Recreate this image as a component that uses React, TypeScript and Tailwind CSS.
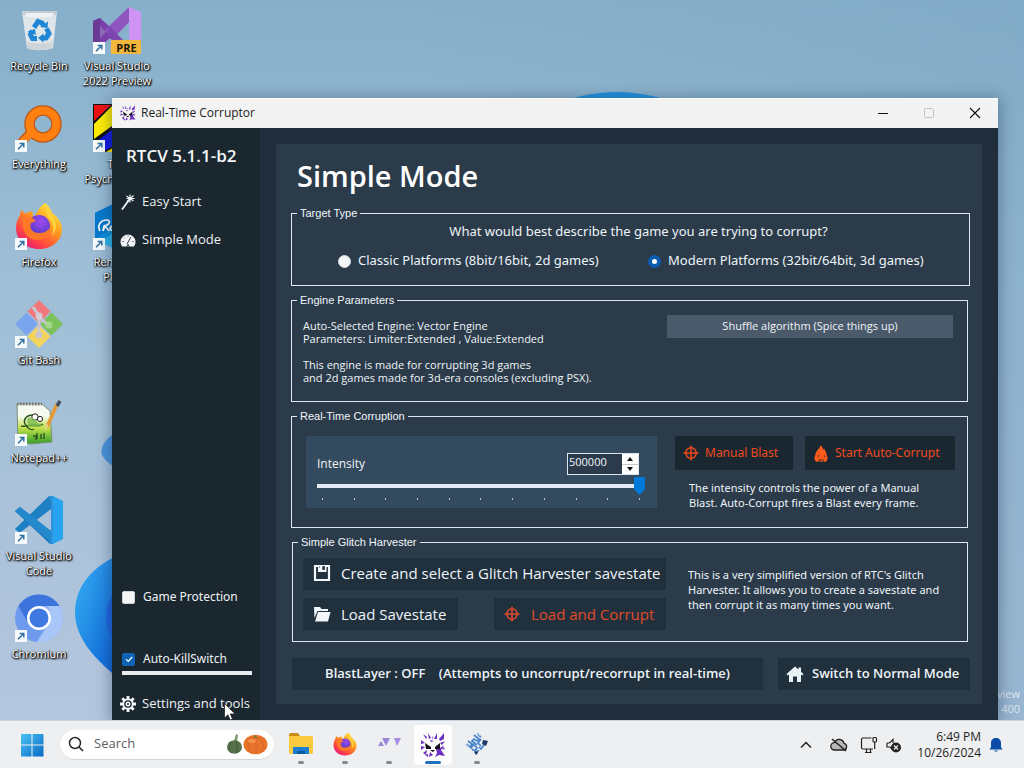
import { useState, type ReactNode } from "react";

/* ---------- Desktop icons ---------- */

function ShortcutBadge() {
  return (
    <svg viewBox="0 0 12 12" className="absolute bottom-0 left-0 size-3">
      <rect width="12" height="12" fill="#f7fafc" />
      <path d="M3 9.2 8.2 4M4.6 3.4h4.2v4.2" fill="none" stroke="#2f6f9f" strokeWidth="1.5" />
    </svg>
  );
}

function RecycleBinIcon() {
  return (
    <svg viewBox="0 0 48 48" className="size-12">
      <path d="M7 5h35l-4 37c-8 3-20 3-26 0z" fill="#dfe6ea" />
      <path d="M7 5h35l-1 4H8z" fill="#c3cdd3" />
      <path d="M10 7h29l-2 4H12z" fill="#eef2f4" />
      <path d="M11 36c9 2 18 2 27 0l-1 6c-8 3-19 3-25 0z" fill="#cdd5da" />
      <g fill="none" stroke="#1f86d6" strokeWidth="5">
        <path d="M19 21.5l4-6 4 1.5 2 3.5" />
        <path d="M31.500 22.500l2.500 5-3 4.500h-4" />
        <path d="M22 32.500h-4.500l-2-4 2-4" />
      </g>
      <path d="M25.500 20.500l7 2 .5-7zM28.500 27.500v9l-5.500-4.500zM12.500 25.500l7.500-2.500 1 6z" fill="#1f86d6" />
    </svg>
  );
}

function VisualStudioIcon() {
  return (
    <svg viewBox="0 0 48 48" className="size-12">
      <path d="M0 15l7-3 9 8 20 22v6L17 32 7 41l-7-4z" fill="#7a3fa8" />
      <path d="M0 15l7-3v29l-7-4z" fill="#6a3a94" />
      <path d="M12 24L36 1v15L20 33z" fill="#8f56c0" />
      <path d="M16 20L36 40v7L14 30z" fill="#7d45ae" />
      <path d="M36 1l12 5v30l-12 10z" fill="#cf93f3" />
      <path d="M7 20v12l6-6z" fill="#8a6ab8" />
      <rect x="18" y="34" width="31" height="15" rx="1" fill="#f3b73b" />
      <text x="33.500" y="46" textAnchor="middle" fontFamily="Open Sans" fontSize="11" fontWeight="700" fill="#1d1608">
        PRE
      </text>
    </svg>
  );
}

function EverythingIcon() {
  return (
    <svg viewBox="0 0 48 48" className="size-12">
      <path d="M14 30L4 41" stroke="#b9581a" strokeWidth="9" />
      <circle cx="28" cy="20" r="13.500" fill="none" stroke="#b9581a" strokeWidth="10.500" />
      <circle cx="28" cy="20" r="13.500" fill="none" stroke="#ff8010" strokeWidth="8" />
      <path d="M17 28L4 41" stroke="#ff8010" strokeWidth="7" />
    </svg>
  );
}

function StripesIcon() {
  return (
    <svg viewBox="0 0 48 48" className="size-12">
      <rect width="48" height="48" fill="#111" />
      <path d="M1 1h17L1 17z" fill="#ee1111" />
      <path d="M20 1h28L1 35V20z" fill="#ffee00" />
      <path d="M1 39L48 5v20L10 48H1z" fill="#1117e0" />
      <path d="M13 48L48 27v21z" fill="#ffee00" />
    </svg>
  );
}

function FirefoxIcon({ className }: { className: string }) {
  return (
    <svg viewBox="0 0 48 48" className={className}>
      <defs>
        <linearGradient id="fx-body" x1="0.85" y1="0.05" x2="0.2" y2="0.95">
          <stop offset="0" stopColor="#fff04a" />
          <stop offset="0.4" stopColor="#ff9a1f" />
          <stop offset="0.75" stopColor="#ff4a3d" />
          <stop offset="1" stopColor="#e8197a" />
        </linearGradient>
        <radialGradient id="fx-core" cx="0.6" cy="0.3" r="0.7">
          <stop offset="0" stopColor="#a04bf2" />
          <stop offset="1" stopColor="#4a3ac0" />
        </radialGradient>
      </defs>
      <path
        d="M30 1c4 3 6 6 7 10 6 4 10 10 10 16 0 12-10 20-23 20S1 38 1 26c0-6 2-10 4-13l1-5c2 1 3 2 4 4 2-2 5-3 8-2-1 2 0 4 1 5 4-6 5-10 11-14z"
        fill="url(#fx-body)"
      />
      <circle cx="24" cy="24" r="11" fill="url(#fx-core)" />
      <path d="M8 17c4-3 8-2 11 0l2 2-5 2c-2 6 2 10 8 10 5 0 8-2 11-5-1 8-6 12-13 12-9 0-16-9-14-21z" fill="#ff7a26" opacity="0.95" />
      <path d="M32 4c4 4 3 9 8 14 2 5 1 12-3 16 3-9 0-15-4-19-2-4-3-7-1-11z" fill="#ffd43a" />
    </svg>
  );
}

function HexIcon() {
  return (
    <svg viewBox="0 0 48 48" className="size-12">
      <path d="M2 11L24 0l22 11v26L24 48 2 37z" fill="#0e90dc" />
      <path d="M2 11L24 0v24L2 37z" fill="#0579cc" />
      <path d="M46 11v26L24 48 8 40z" fill="#27b4e8" />
      <path d="M7 29c-3-5 0-11 7-11 4 0 3 5-3 6l-1 5 2-5 4 5M17 26c2-3 4-2 4 0 0 3-4 3-4 0z" fill="none" stroke="#fff" strokeWidth="1.700" />
    </svg>
  );
}

function GitIcon() {
  return (
    <svg viewBox="0 0 48 48" className="size-12">
      <path d="M24 0l11.500 11.500L24 23 12.500 11.500z" fill="#f2787c" />
      <path d="M36.500 12.500L48 24 36.500 35.500 25 24z" fill="#7cc25a" />
      <path d="M11.500 12.500L23 24 11.500 35.500 0 24z" fill="#7aa5ee" />
      <path d="M24 25l11.500 11.500L24 48 12.500 36.500z" fill="#f3d45c" />
      <path d="M18 7l6 9v18M24 17l9 8" fill="none" stroke="#c9c6d2" strokeWidth="3" />
      <circle cx="24" cy="35" r="3.500" fill="#c9c6d2" />
      <circle cx="34" cy="25" r="3.500" fill="#a6d58c" />
      <circle cx="24" cy="16" r="3.500" fill="#d6cdd6" />
    </svg>
  );
}

function NotepadIcon() {
  return (
    <svg viewBox="0 0 48 48" className="size-12">
      <defs>
        <linearGradient id="np-page" x1="0" y1="0" x2="0" y2="1">
          <stop offset="0.3" stopColor="#f6faf0" />
          <stop offset="0.6" stopColor="#c3e04a" />
          <stop offset="1" stopColor="#2f9e2a" />
        </linearGradient>
      </defs>
      <path d="M2 6h25l8 7 2 31-22 2L3 42z" fill="url(#np-page)" stroke="#7d8f76" strokeWidth="1" />
      <path d="M2 6h25" stroke="#777" strokeWidth="3" strokeDasharray="1.500 1.500" />
      <path d="M6 28c5 1 8-1 12-1s7 2 10-1M18 17c-7 0-10 5-8 9s6 7 9 5M18 38h3v4M22 35v6M26 36v5M29 35v6" fill="none" stroke="#2c5423" strokeWidth="1.400" />
      <circle cx="20" cy="19" r="3.200" fill="#fff" stroke="#222" />
      <circle cx="25" cy="21" r="2.600" fill="#fff" stroke="#222" />
      <path d="M12 21c3-3 6-1 9 2s4 3 7 2l-3 4H13z" fill="#7cb94c" opacity="0.800" />
      <path d="M42 6L32 29" stroke="#e59a35" strokeWidth="3.500" />
      <path d="M45 3l-3 5" stroke="#444d63" strokeWidth="3.500" />
      <path d="M33 27l-3 7 1-8z" fill="#f2d8a4" />
    </svg>
  );
}

function VSCodeIcon() {
  return (
    <svg viewBox="0 0 48 48" className="size-12">
      <path d="M0 33l4.500 4L36 13V0h-2z" fill="#1d7fc4" />
      <path d="M0 15l5-4 31 24v13l-2-1z" fill="#1673b6" />
      <path d="M0 15l5-4 31 24v12z" fill="#2488cc" />
      <path d="M34 0h4l10 5v38l-10 5h-4l2-3V3z" fill="#27a4f0" />
      <path d="M34 0h4v48h-4l2-4V4z" fill="#3093da" />
    </svg>
  );
}

function ChromiumIcon() {
  return (
    <svg viewBox="0 0 48 48" className="size-12">
      <circle cx="24" cy="24" r="24" fill="#8fb1f2" />
      <path d="M24 24L3.500 12A24 24 0 0 0 22 48l10-18z" fill="#6f9bee" />
      <path d="M22 48l12-18c4-7 2-14-2-18h12.500A24 24 0 0 1 22 48z" fill="#a9c6f8" />
      <path d="M3.500 12A24 24 0 0 1 44.500 12H24L12 27z" fill="#3d74dc" />
      <circle cx="24" cy="24" r="12" fill="#fff" />
      <circle cx="24" cy="24" r="9.500" fill="#3f78e0" />
    </svg>
  );
}

function DesktopIcon({ label, icon, shortcut = true }: { label: string; icon: ReactNode; shortcut?: boolean }) {
  return (
    <div className="flex flex-col items-center gap-1">
      <div className="relative size-12">
        {icon}
        {shortcut && <ShortcutBadge />}
      </div>
      <span className="w-[76px] text-center text-[11px] leading-[15px] whitespace-pre-line text-white [text-shadow:1px_1px_2px_#000,0_1px_2px_#000,1px_0_1px_#000]">
        {label}
      </span>
    </div>
  );
}

function Wallpaper() {
  return (
    <svg viewBox="0 0 1024 720" preserveAspectRatio="none" className="absolute inset-0 size-full">
      <defs>
        <linearGradient id="sky" x1="0" y1="0" x2="0" y2="1">
          <stop offset="0" stopColor="#86afca" />
          <stop offset="0.4" stopColor="#9fbfd6" />
          <stop offset="1" stopColor="#b4c6de" />
        </linearGradient>
        <linearGradient id="haze" x1="0" y1="0" x2="1" y2="0">
          <stop offset="0" stopColor="#7ca6c4" stopOpacity="0" />
          <stop offset="1" stopColor="#7ca6c4" stopOpacity="0.500" />
        </linearGradient>
        <linearGradient id="petal" x1="0" y1="0" x2="1" y2="1">
          <stop offset="0" stopColor="#38b2f3" />
          <stop offset="1" stopColor="#0a5fd6" />
        </linearGradient>
      </defs>
      <rect width="1024" height="720" fill="url(#sky)" />
      <rect x="400" width="624" height="720" fill="url(#haze)" />
      <ellipse cx="617" cy="140" rx="90" ry="48" fill="#2290dc" />
      <path d="M113 434c-9 7-13 14-11 21 2 4 6 8 11 11z" fill="#4a94dc" />
      <path d="M116 556C88 570 75 590 75 612c0 24 17 45 41 64z" fill="url(#petal)" />
      <path d="M116 590c-10 12-14 30-4 50l4 6z" fill="#1d63e0" />
    </svg>
  );
}

/* ---------- Application icons ---------- */

function CorruptorIcon({ className }: { className: string }) {
  return (
    <svg viewBox="0 0 26 26" className={className} fill="#6a2fc0">
      <path d="M3 2l4 3-1 2zM8 1l3 5-2 1zM14 7l3-6 0 6zM19 7l5-6v6l-4 2zM1 8l4 3-4 1zM20 11l5-2-3 4zM1 14l4 1-4 3zM3 21l4-3-1 5zM16 17l4-1 4-3-3 5 4 6-6-1-4 2 2-4zM10 20l3 3-4 2zM10 8l4 1-3 1zM22 15l3 1-2 2zM5 23l3-1 0 3zM12 4l1 2-1 1z" />
      <path d="M5 11l6 4v2H6zM20 11l-5 4v2h5zM10 18h5l-2 2z" fill="#15101c" />
    </svg>
  );
}

function WandIcon() {
  return (
    <svg viewBox="0 0 16 16" className="size-4" fill="none" stroke="#f2f5f7">
      <path d="M2 15.500L9 6" strokeWidth="1.800" />
      <path d="M10 0.500v8M6.500 2l7 5M13.500 1.500l-6.500 6M6.500 4.500h8" strokeWidth="1.100" />
    </svg>
  );
}

function GaugeIcon() {
  return (
    <svg viewBox="0 0 16 16" className="size-4">
      <path d="M2 14.500a7.500 7.500 0 1 1 12 0z" fill="#f2f5f7" />
      <path d="M7 12l4-7M2.500 9.500h1.200M4 5.500l.8.8M8 3.500v1M12.400 9.500h1.200M7 14.500l1-2 1 2" stroke="#1b272f" strokeWidth="0.900" fill="none" />
    </svg>
  );
}

function GearIcon() {
  return (
    <svg viewBox="0 0 16 16" className="size-4" fill="none" stroke="#f2f5f7">
      <path d="M8 0v3M8 13v3M0 8h3M13 8h3M2.300 2.300l2.200 2.200M11.500 11.500l2.200 2.200M13.700 2.300l-2.200 2.200M4.500 11.500l-2.200 2.200" strokeWidth="2.800" />
      <circle cx="8" cy="8" r="4.800" strokeWidth="1.900" />
      <circle cx="8" cy="8" r="1.700" strokeWidth="1.600" />
    </svg>
  );
}

function TargetIcon() {
  return (
    <svg viewBox="0 0 16 16" className="size-4 shrink-0" fill="none" stroke="currentColor" strokeWidth="1.500">
      <circle cx="8" cy="8" r="5.200" />
      <path d="M8 0.500v15M0.500 8h15" />
    </svg>
  );
}

function FlameIcon() {
  return (
    <svg viewBox="0 0 14 18" className="h-[18px] w-3.5 shrink-0">
      <path d="M7 1c.5 2 2 3 2.500 4.500l1-.5c.5 2 2 3 2 5.500 1 2 1.500 4 .5 6l-1.500 1.200H2.500L1 16.500c-1-2-.3-4 .5-6C1.700 8 3 6.500 4.500 5 5.500 4 6 3 7 1z" fill="#ff5a1a" />
      <path d="M4.500 18l1-3M7 18v-3M9.500 18l-.8-3M4 13l1-2M11 13.500l-.5-2" fill="none" stroke="#1a2731" strokeWidth="0.800" />
    </svg>
  );
}

function SaveIcon() {
  return (
    <svg viewBox="0 0 18 18" className="size-[18px] shrink-0">
      <path d="M2 2h14v14H2z" fill="none" stroke="#f2f7fb" strokeWidth="2.200" />
      <path d="M5 1.500h8.500v6.500H5z" fill="#f2f7fb" />
      <path d="M6.500 2.500v1M9.800 2.500h1.600v3H9.800z" fill="#21303d" stroke="#21303d" strokeWidth="0.900" />
    </svg>
  );
}

function FolderIcon() {
  return (
    <svg viewBox="0 0 18 18" className="size-[18px] shrink-0" fill="#f2f7fb">
      <path d="M1 2h6l1.500 2H15v2H4.500L1.500 13z" />
      <path d="M5 7h12.500L15 16.500H2z" />
    </svg>
  );
}

function HomeIcon() {
  return (
    <svg viewBox="0 0 18 18" className="size-[18px] shrink-0" fill="#e9f3f5">
      <path d="M9 1.500L0.500 9l1.200 1.400L3 9.500V17h4v-5.500h4V17h4V9.500l1.300.9L17.500 9 15 6.800V2.500h-2.500v2z" />
    </svg>
  );
}

/* ---------- Window ---------- */

function TitleBar() {
  return (
    <header className="flex h-[30px] items-center border-t border-white bg-[#f3f3f3] pb-0.5 pl-2 text-black">
      <CorruptorIcon className="size-4" />
      <h1 className="ml-[5px] flex-1 text-[12px] text-[#1c1c1c]">Real-Time Corruptor</h1>
      <button aria-label="Minimize" className="grid h-full w-[46px] place-items-center">
        <svg viewBox="0 0 12 12" className="size-3"><path d="M1 6.500h10" stroke="#111" /></svg>
      </button>
      <button aria-label="Maximize" disabled className="grid h-full w-[46px] place-items-center">
        <svg viewBox="0 0 12 12" className="size-3"><rect x="1.500" y="1.500" width="9" height="9" rx="1" fill="none" stroke="#c4c4c4" /></svg>
      </button>
      <button aria-label="Close" className="grid h-full w-[46px] place-items-center">
        <svg viewBox="0 0 12 12" className="size-3"><path d="M1 1l10 10M11 1L1 11" stroke="#111" strokeWidth="1.100" /></svg>
      </button>
    </header>
  );
}

function CheckRow({ label, defaultChecked }: { label: string; defaultChecked?: boolean }) {
  return (
    <label className="flex h-6 items-center gap-2 pl-2.5 font-['Noto_Sans',sans-serif] text-[12px]">
      <span className="grid size-[13px] place-items-center">
        <input
          type="checkbox"
          defaultChecked={defaultChecked}
          className="peer col-start-1 row-start-1 size-[13px] appearance-none rounded-[2px] border border-[#d0d4d8] bg-[#f4f5f6] checked:border-[#0f62b5] checked:bg-[#0f62b5]"
        />
        <svg viewBox="0 0 10 10" className="pointer-events-none invisible col-start-1 row-start-1 size-2.5 peer-checked:visible">
          <path d="M2 5.200l2.200 2.200L8.200 3" fill="none" stroke="#fff" strokeWidth="1.200" />
        </svg>
      </span>
      {label}
    </label>
  );
}

function Sidebar() {
  return (
    <nav className="flex w-[148px] shrink-0 flex-col bg-[#1b272f] text-[13px] text-[#eef2f4]">
      <div className="flex h-[55px] items-center pl-3.5 text-[17px] font-semibold text-[#f3f6f8]">RTCV 5.1.1-b2</div>
      <button className="flex h-[38px] items-center gap-1.5 pl-2"><WandIcon />Easy Start</button>
      <button className="flex h-[38px] items-center gap-1.5 pl-2"><GaugeIcon />Simple Mode</button>
      <div className="mt-auto">
        <CheckRow label="Game Protection" />
      </div>
      <div className="mt-[38px]">
        <CheckRow label="Auto-KillSwitch" defaultChecked />
        <div className="mr-2 ml-2.5 h-1 bg-[#e9ecef]" />
      </div>
      <button className="mt-[13px] flex h-8 items-center gap-1.5 pl-2"><GearIcon />Settings and tools</button>
    </nav>
  );
}

function Group({ title, className, children }: { title: string; className: string; children: ReactNode }) {
  return (
    <fieldset className={`min-w-0 border border-[#dce9f2] ${className}`}>
      <legend className="ml-[5px] px-[3px] font-['Liberation_Sans',sans-serif] text-[11px] leading-[14px] text-[#f1f6fa]">{title}</legend>
      {children}
    </fieldset>
  );
}

function PlatformOption({ label, value, current, onPick }: { label: string; value: string; current: string; onPick: (v: string) => void }) {
  return (
    <label className="flex items-center gap-[7px]">
      <input
        type="radio"
        name="platform"
        checked={current === value}
        onChange={() => onPick(value)}
        className="size-[13px] appearance-none rounded-full border border-[#d8dde2] bg-[#f6f7f9] checked:border-4 checked:border-[#0b5cb0] checked:bg-white"
      />
      {label}
    </label>
  );
}

const TICKS = Array.from({ length: 11 }, (_, i) => i);

function IntensityBox() {
  const [value, setValue] = useState(500000);
  const clamp = (v: number) => Math.max(0, Math.min(500000, v));
  return (
    <div className="w-[351px] shrink-0 bg-[#344a5e] pt-[17px] pr-3 pb-2 pl-[11px]">
      <div className="flex h-[22px] items-center justify-between pr-1.5">
        <label htmlFor="intensity" className="text-[12px] text-[#eef4f8]">Intensity</label>
        <div className="flex h-[22px] w-[72px] border border-[#dce6ee] bg-[#2b3b4b]">
          <input
            type="text"
            aria-label="Intensity value"
            value={value}
            onChange={(e) => setValue(clamp(Number(e.target.value) || 0))}
            className="min-w-0 flex-1 bg-transparent pb-1 pl-px text-[11px] text-[#f1f6fa]"
          />
          <div className="flex w-4 flex-col gap-px bg-[#c3c8ce]">
            <button aria-label="Increase" onClick={() => setValue((v) => clamp(v + 1))} className="grid flex-1 place-items-center bg-white">
              <svg viewBox="0 0 6 4" className="h-1 w-1.5"><path d="M0 4l3-4 3 4z" fill="#111" /></svg>
            </button>
            <button aria-label="Decrease" onClick={() => setValue((v) => clamp(v - 1))} className="grid flex-1 place-items-center bg-white">
              <svg viewBox="0 0 6 4" className="h-1 w-1.5"><path d="M0 0l3 4 3-4z" fill="#111" /></svg>
            </button>
          </div>
        </div>
      </div>
      <input
        id="intensity"
        type="range"
        min={0}
        max={500000}
        value={value}
        onChange={(e) => setValue(Number(e.target.value))}
        className="mt-0.5 block h-[18px] w-full appearance-none bg-[linear-gradient(#e3e9f5,#e3e9f5)] bg-[length:calc(100%-6px)_4px] bg-[position:left_center] bg-no-repeat [&::-webkit-slider-thumb]:h-[18px] [&::-webkit-slider-thumb]:w-[11px] [&::-webkit-slider-thumb]:appearance-none [&::-webkit-slider-thumb]:bg-[#0078d7] [&::-webkit-slider-thumb]:[clip-path:polygon(0_0,100%_0,100%_70%,50%_100%,0_70%)]"
      />
      <div className="mt-[3px] flex justify-between px-[5px]">
        {TICKS.map((t) => (
          <span key={t} className="h-0.5 w-px bg-[#b8c8d4]" />
        ))}
      </div>
    </div>
  );
}

function MainPanel() {
  const [platform, setPlatform] = useState("modern");
  return (
    <main className="flex min-w-0 flex-1 bg-[#1f2e3a] p-4">
      <section className="flex min-w-0 flex-1 flex-col gap-[7px] bg-[#2b3b4a] pr-3 pl-[15px] text-[13px] text-[#eef4f8]">
        <h2 className="-mb-[7px] flex h-[62px] items-center pt-0.5 pl-1.5 text-[29px] font-semibold text-white">Simple Mode</h2>

        <Group title="Target Type" className="pb-3.5 font-['Noto_Sans',sans-serif]">
          <p className="pl-4 text-center leading-[22px]">What would best describe the game you are trying to corrupt?</p>
          <div className="mt-2 -mb-px grid h-[22px] grid-cols-[310px_1fr] items-center pl-[46px]">
            <PlatformOption label="Classic Platforms (8bit/16bit, 2d games)" value="classic" current={platform} onPick={setPlatform} />
            <PlatformOption label="Modern Platforms (32bit/64bit, 3d games)" value="modern" current={platform} onPick={setPlatform} />
          </div>
        </Group>

        <Group title="Engine Parameters" className="mr-0.5 pb-[17px]">
          <div className="flex items-start justify-between gap-4 pr-3.5 pl-[11px]">
            <p className="pt-3 text-[11px] leading-[13px]">
              Auto-Selected Engine: Vector Engine
              <br />
              Parameters: Limiter:Extended , Value:Extended
              <br />
              <br />
              This engine is made for corrupting 3d games
              <br />
              and 2d games made for 3d-era consoles (excluding PSX).
            </p>
            <button className="mt-2 h-[23px] w-[286px] shrink-0 bg-[#4b5a6b] text-[11px]">Shuffle algorithm (Spice things up)</button>
          </div>
        </Group>

        <Group title="Real-Time Corruption" className="mr-0.5 pb-[17px]">
          <div className="flex items-start gap-[18px] pt-[13px] pr-3 pl-3.5">
            <IntensityBox />
            <div className="font-['Noto_Sans',sans-serif]">
              <div className="flex gap-3 text-[12px] text-[#ee4a1c]">
                <button className="flex h-[34px] w-[118px] items-center gap-1.5 bg-[#1a2731] pl-2"><TargetIcon />Manual Blast</button>
                <button className="flex h-[34px] w-[150px] items-center gap-[7px] bg-[#1a2731] pl-[9px]"><FlameIcon />Start Auto-Corrupt</button>
              </div>
              <p className="mt-2.5 ml-3.5 text-[11px] leading-[15px]">
                The intensity controls the power of a Manual
                <br />
                Blast. Auto-Corrupt fires a Blast every frame.
              </p>
            </div>
          </div>
        </Group>

        <Group title="Simple Glitch Harvester" className="mr-0.5 ml-px pb-[11px]">
          <div className="flex items-start gap-[22px] pt-[9px] pl-2.5">
            <div className="flex w-[363px] shrink-0 flex-col gap-2 text-[15px]">
              <button className="flex h-8 items-center gap-2.5 bg-[#21303d] pb-0.5 pl-2.5"><SaveIcon />Create and select a Glitch Harvester savestate</button>
              <div className="flex justify-between">
                <button className="flex h-8 w-[155px] items-center gap-2.5 bg-[#21303d] pl-2.5"><FolderIcon />Load Savestate</button>
                <button className="flex h-8 w-[172px] items-center gap-[11px] bg-[#21303d] pl-2.5 text-[#e04a28]"><TargetIcon />Load and Corrupt</button>
              </div>
            </div>
            <p className="pt-[9px] font-['Noto_Sans',sans-serif] text-[11px] leading-[15px]">
              This is a very simplified version of RTC's Glitch
              <br />
              Harvester. It allows you to create a savestate and
              <br />
              then corrupt it as many times you want.
            </p>
          </div>
        </Group>

        <div className="mt-[9px] ml-px flex gap-[15px] text-[13px] font-semibold">
          <button className="h-8 flex-1 bg-[#21303d] whitespace-pre">BlastLayer : OFF    (Attempts to uncorrupt/recorrupt in real-time)</button>
          <button className="flex h-8 w-[192px] items-center gap-2 bg-[#21303d] pl-2"><HomeIcon />Switch to Normal Mode</button>
        </div>
      </section>
    </main>
  );
}

/* ---------- Taskbar ---------- */

function TaskItem({ label, active, children }: { label: string; active?: boolean; children: ReactNode }) {
  return (
    <button
      aria-label={label}
      className={`flex h-10 w-[38px] flex-col items-center justify-between rounded pt-[7px] pb-px ${active ? "bg-white/90" : ""}`}
    >
      {children}
      <span className={active ? "h-[3px] w-4 rounded-full bg-[#1e6fc0]" : "h-[3px] w-1.5 rounded-full bg-[#85878a]"} />
    </button>
  );
}

function Taskbar() {
  return (
    <footer className="flex h-12 shrink-0 items-center border-t border-[#c9d4de] bg-[#eeeff0] text-[#1e1e1e]">
      <button aria-label="Start" className="ml-5">
        <svg viewBox="0 0 24 24" className="size-6">
          <defs>
            <linearGradient id="win" x1="0" y1="0" x2="1" y2="1">
              <stop offset="0" stopColor="#4cc3f5" />
              <stop offset="1" stopColor="#0669c4" />
            </linearGradient>
          </defs>
          <path d="M1 1h10.500v10.500H1zM12.500 1H23.500v10.500H12.500zM1 12.500h10.500V23.500H1zM12.500 12.500H23.500V23.500H12.500z" fill="url(#win)" />
        </svg>
      </button>
      <label className="ml-4 flex h-[30px] w-[214px] items-center rounded-full border-b border-[#d2d4d6] bg-white pr-1.5 pl-2">
        <svg viewBox="0 0 16 16" className="size-4 shrink-0">
          <circle cx="7" cy="7" r="5.500" fill="none" stroke="#2b2b2b" strokeWidth="1.500" />
          <path d="M11 11l4 4" stroke="#2b2b2b" strokeWidth="1.700" />
        </svg>
        <input aria-label="Search" placeholder="Search" className="ml-2.5 w-0 flex-1 bg-transparent text-[13px] placeholder:text-[#5e6063]" />
        <svg viewBox="0 0 42 22" className="h-[22px] w-[42px] shrink-0">
          <path d="M8 8l2-7 2 1-1 7z" fill="#7f9a6c" />
          <ellipse cx="8.500" cy="14" rx="7.500" ry="6.800" fill="#56704a" />
          <path d="M5 9c-2 4-2 8 0 11M10 8c2 4 2 8 0 12" fill="none" stroke="#3f5a37" strokeWidth="0.900" />
          <ellipse cx="29.500" cy="11.500" rx="12" ry="9.800" fill="#e8742c" />
          <path d="M27 5c-5 4-6 10-2 15M30 5c0 5 0 10 0 16M33 5c5 4 6 10 2 15" fill="none" stroke="#d9652a" strokeWidth="0.900" />
          <path d="M27 5l2-3 3 3z" fill="#8a7a3a" />
          <ellipse cx="26" cy="8" rx="4" ry="2" fill="#f6a05a" opacity="0.700" />
        </svg>
      </label>
      <div className="ml-2 flex gap-1.5">
        <TaskItem label="File Explorer">
          <svg viewBox="0 0 26 24" className="h-6 w-[26px]">
            <path d="M1 3c0-1 .5-2 2-2h7l2 3H1z" fill="#c98a16" />
            <path d="M1 4h22c1 0 2 .5 2 2v14c0 1-.5 2-2 2H3c-1.500 0-2-1-2-2z" fill="#fbca3e" />
            <path d="M5 15h16v7H5z" fill="#1c7fd0" />
            <path d="M9 19h8v3H9z" fill="#0b5a9e" />
          </svg>
        </TaskItem>
        <TaskItem label="Firefox">
          <FirefoxIcon className="size-6" />
        </TaskItem>
        <TaskItem label="Triangles">
          <svg viewBox="0 0 24 24" className="size-6">
            <path d="M1 14l3-5 3 5zM5 6h8l-4 8z" fill="#9a86d8" />
            <path d="M17 6h7l-4 8z" fill="#a58fe0" />
          </svg>
        </TaskItem>
        <TaskItem label="Real-Time Corruptor" active>
          <CorruptorIcon className="size-[26px]" />
        </TaskItem>
        <TaskItem label="Blue diamond">
          <svg viewBox="0 0 24 24" className="size-6" fill="none" stroke="#4683cc" strokeWidth="1.700">
            <path d="M9 3l5 4-2 2-3-2-2 2 5 4M13 3l3 2M16 7l-3 4 3 3M3 9l4 3-2 3M2 12l4 4 2-3M8 12l4 4-2 3-3-2M14 15l2 2 3-4M11 21l3-3" />
            <path d="M18 8l5 1-2 5-4-2zM9 20l3-1 1 2-2 2z" fill="#1c3a6b" stroke="none" />
            <path d="M12 1l3 3M1 12l3 3" stroke="#8fb6e4" />
          </svg>
        </TaskItem>
      </div>
      <div className="ml-auto flex items-center pr-[21px]">
        <button aria-label="Show hidden icons" className="mr-4">
          <svg viewBox="0 0 16 16" className="size-4"><path d="M3 10.500l5-5 5 5" fill="none" stroke="#222" strokeWidth="1.500" /></svg>
        </button>
        <svg viewBox="0 0 18 16" className="mr-3 h-4 w-[18px]">
          <path d="M4.500 13h9a3.400 3.400 0 0 0 .5-6.700A5 5 0 0 0 4.500 5.600 3.700 3.700 0 0 0 4.500 13z" fill="#b6b7b9" stroke="#222" strokeWidth="1.300" />
          <path d="M2 2l14 12" stroke="#222" strokeWidth="1.600" />
        </svg>
        <svg viewBox="0 0 18 18" className="mr-[7px] size-[18px]" fill="none" stroke="#222" strokeWidth="1.200">
          <path d="M11.500 2H3a1.500 1.500 0 0 0-1.500 1.500v8A1.500 1.500 0 0 0 3 13h10M5 16.500h6.500M6.500 13v3M10.500 13v3" />
          <rect x="13" y="1.500" width="3.500" height="4.500" rx="1" />
          <path d="M14.700 6v7" />
        </svg>
        <svg viewBox="0 0 18 18" className="mr-3.5 size-[18px]">
          <path d="M2 7h2.500L8 3.500V7M2 7v4h3l2 2" fill="none" stroke="#222" strokeWidth="1.200" />
          <circle cx="11" cy="11.500" r="5" fill="#222" />
          <path d="M9 9.500l4 4M13 9.500l-4 4" stroke="#eeeff0" strokeWidth="1.200" />
        </svg>
        <div className="text-right text-[12px] leading-4">
          <div>6:49 PM</div>
          <div>10/26/2024</div>
        </div>
        <button aria-label="Notifications" className="ml-2">
          <svg viewBox="0 0 14 16" className="h-4 w-3.5" fill="#0b4aa8">
            <path d="M7 1c3 0 5 2 5 5v4l1.500 2.500H.5L2 10V6c0-3 2-5 5-5zM5 13.500h4c-.5 1.500-3.500 1.500-4 0z" />
          </svg>
        </button>
      </div>
    </footer>
  );
}

export default function App() {
  return (
    <div className="flex h-screen flex-col overflow-hidden font-['Open_Sans','Noto_Sans',sans-serif]">
      <div className="relative min-h-0 flex-1 overflow-hidden">
        <Wallpaper />
        <div className="relative grid w-[156px] auto-rows-[98px] grid-cols-2 pt-1.5">
          <DesktopIcon label="Recycle Bin" icon={<RecycleBinIcon />} shortcut={false} />
          <DesktopIcon label="Visual Studio 2022 Preview" icon={<VisualStudioIcon />} />
          <DesktopIcon label="Everything" icon={<EverythingIcon />} />
          <DesktopIcon label={"The\nPsychonauts"} icon={<StripesIcon />} />
          <DesktopIcon label="Firefox" icon={<FirefoxIcon className="size-12" />} />
          <DesktopIcon label={"Renamer\nPlus+"} icon={<HexIcon />} />
          <div className="col-start-1"><DesktopIcon label="Git Bash" icon={<GitIcon />} /></div>
          <div className="col-start-1"><DesktopIcon label="Notepad++" icon={<NotepadIcon />} /></div>
          <div className="col-start-1"><DesktopIcon label="Visual Studio Code" icon={<VSCodeIcon />} /></div>
          <div className="col-start-1"><DesktopIcon label="Chromium" icon={<ChromiumIcon />} /></div>
        </div>
        <div className="absolute right-1 bottom-1 text-right text-[11px] leading-[15px] text-white/70">
          Preview
          <br />
          400
        </div>
        <div className="absolute top-[98px] right-[26px] bottom-0 left-[112px] flex flex-col shadow-[0_2px_14px_2px_rgba(30,50,80,0.4)]">
          <TitleBar />
          <div className="flex min-h-0 flex-1">
            <Sidebar />
            <MainPanel />
          </div>
        </div>
        <svg viewBox="0 0 12 19" className="pointer-events-none absolute top-[703px] left-[224px] h-[19px] w-3">
          <path d="M0.500 0.500v14.500l3.400-3.200 2.300 5.200 2.400-1-2.300-5.100h4.900z" fill="#fff" stroke="#222" strokeWidth="0.800" />
        </svg>
      </div>
      <Taskbar />
    </div>
  );
}
